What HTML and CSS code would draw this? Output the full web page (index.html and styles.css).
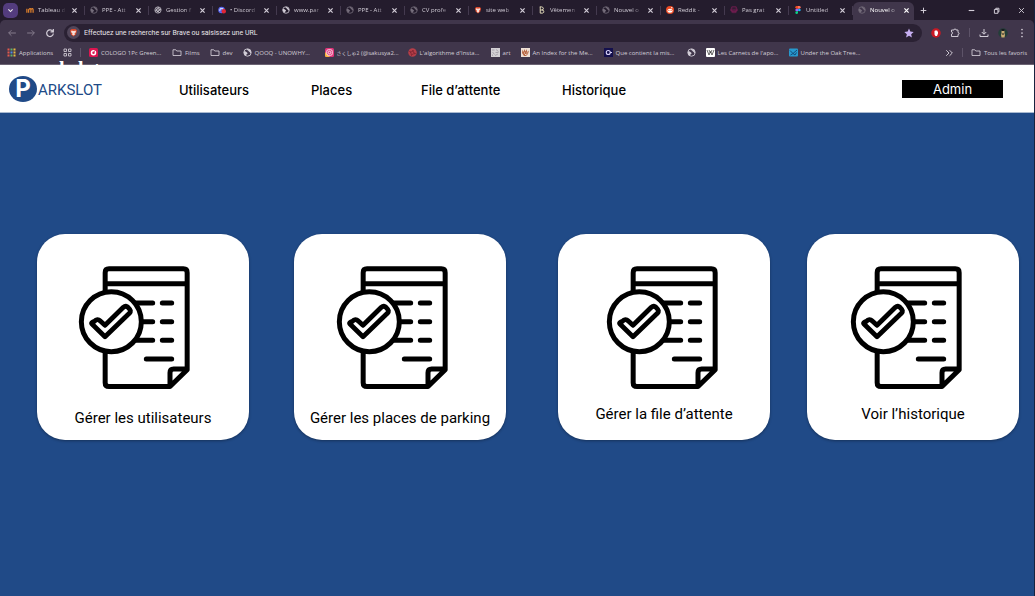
FILE: index.html
```html
<!DOCTYPE html>
<html lang="fr">
<head>
<meta charset="utf-8">
<title>Parkslot</title>
<link rel="stylesheet" href="styles.css">
</head>
<body>
<svg class="defs" aria-hidden="true">
  <symbol id="globe" viewBox="0 0 18 18"><circle cx="9" cy="9" r="7.4" fill="none" stroke="currentColor" stroke-width="1.8"/><path d="M2 7c3-1 4 1 6 2s1 3-1 4-1 3-1 3C3 14 1 11 2 7zM8 2c0 3 2 2 3 4s2 1 3 3 2 1 2 1c1-4-3-8-8-8z" fill="currentColor"/></symbol>
  <symbol id="folder" viewBox="0 0 20 18"><path d="M2 14V3.500h5.500l2 2.500H18v9H2z" fill="none" stroke="currentColor" stroke-width="1.700" stroke-linejoin="round"/></symbol>
  <symbol id="brave" viewBox="0 0 18 18"><path d="M5 2h8l3 3-2 8-5 4-5-4-2-8z" fill="#d9482b"/><path d="M5 5l4 1 4-1 1 3-3 3 1 2-3 2-3-2 1-2-3-3z" fill="#f6ded8"/></symbol>
  <symbol id="cross" viewBox="0 0 10 10"><path d="M2 2l6 6M8 2l-6 6" stroke="currentColor" stroke-width="1.700" fill="none"/></symbol>
  <symbol id="report" viewBox="144 123 336 369">
    <g fill="none" stroke="#000" stroke-width="15" stroke-linejoin="round" stroke-linecap="round">
      <path d="M420 484.500H237q-11.500 0-11.500-11.500V143q0-11.500 11.500-11.500h223q11.500 0 11.500 11.500v291zM226 176.500h245M420 483v-40q0-11 11-11h40"/>
      <path d="M300 234h68M397 234h28M300 290h68M397 290h28M300 346h68M397 346h28M349 402h76"/>
      <circle cx="244" cy="290" r="90" fill="#fff"/>
      <path d="M193 289q9-10 18-1l14 13 55-54q8-7 15 1 11 10 3 17l-73 70-39-38q-4-4 7-8z" stroke-width="14.500"/>
    </g>
  </symbol>
</svg>

<header class="browser">
  <div class="tabs">
    <button class="tab-menu" aria-label="Rechercher des onglets"><svg viewBox="0 0 10 10"><path d="M2 3.500l3 3 3-3" fill="none" stroke="#eee" stroke-width="1.600"/></svg></button>
    <button class="tab"><svg class="ico" viewBox="0 0 18 18"><path d="M2 6v9M6 15V8q4-4 5 0v7M11 8q4-4 5 0v7" fill="none" stroke="#e8862c" stroke-width="2.600"/></svg><span>Tableau d</span><svg class="x"><use href="#cross"/></svg></button>
    <button class="tab"><svg class="ico dim"><use href="#globe"/></svg><span>PPE - Att</span><svg class="x"><use href="#cross"/></svg></button>
    <button class="tab"><svg class="ico" viewBox="0 0 18 18"><g fill="none" stroke="#c9c5ce" stroke-width="1.800"><circle cx="9" cy="9" r="7"/><circle cx="9" cy="9" r="3"/><path d="M9 2l5 8M16 7l-9 6M13 15L4 10M3 12L8 4"/></g></svg><span>Gestion f</span><svg class="x"><use href="#cross"/></svg></button>
    <button class="tab"><svg class="ico" viewBox="0 0 18 18"><circle cx="8" cy="9" r="7.500" fill="#5966f2"/><path d="M4 11l1-5h6l1 4" fill="none" stroke="#fff" stroke-width="2"/><circle cx="13" cy="12" r="5" fill="#df2635"/></svg><span>• Discord</span><svg class="x"><use href="#cross"/></svg></button>
    <button class="tab"><svg class="ico"><use href="#globe"/></svg><span>www.par</span><svg class="x"><use href="#cross"/></svg></button>
    <button class="tab"><svg class="ico dim"><use href="#globe"/></svg><span>PPE - Att</span><svg class="x"><use href="#cross"/></svg></button>
    <button class="tab"><svg class="ico dim"><use href="#globe"/></svg><span>CV profe</span><svg class="x"><use href="#cross"/></svg></button>
    <button class="tab"><svg class="ico"><use href="#brave"/></svg><span>site web</span><svg class="x"><use href="#cross"/></svg></button>
    <button class="tab"><svg class="ico" viewBox="0 0 18 18"><path d="M5 2v14h5q4-1 3-4 0-3-4-3 4-1 3-4-1-3-4-3H4M5 9h4" fill="none" stroke="#e4ddbb" stroke-width="2.200"/></svg><span>Vêtemen</span><svg class="x"><use href="#cross"/></svg></button>
    <button class="tab"><svg class="ico dim"><use href="#globe"/></svg><span>Nouvel o</span><svg class="x"><use href="#cross"/></svg></button>
    <button class="tab"><svg class="ico" viewBox="0 0 18 18"><circle cx="9" cy="9" r="9" fill="#ed4b24"/><ellipse cx="9" cy="10.500" rx="6" ry="4.500" fill="#fff"/><circle cx="13" cy="4" r="1.500" fill="#fff"/><circle cx="6.500" cy="10" r="1.300" fill="#ed4b24"/><circle cx="11.500" cy="10" r="1.300" fill="#ed4b24"/></svg><span>Reddit -</span><svg class="x"><use href="#cross"/></svg></button>
    <button class="tab"><svg class="ico" viewBox="0 0 18 18"><path d="M4 2h10v10H4zM2 6v5h14V6M5 12v4M13 12v4M7 6v3M11 6v3M7 15h4" fill="none" stroke="#7b1d55" stroke-width="2"/></svg><span>Pas grat</span><svg class="x"><use href="#cross"/></svg></button>
    <button class="tab"><svg class="ico" viewBox="0 0 18 18"><path d="M9 0H6a3 3 0 000 6h3z" fill="#f24e1e"/><path d="M9 0h3a3 3 0 010 6H9z" fill="#ff7262"/><path d="M9 6H6a3 3 0 000 6h3z" fill="#a259ff"/><circle cx="12" cy="9" r="3" fill="#1abcfe"/><path d="M9 12H6a3 3 0 103 3z" fill="#0acf83"/></svg><span>Untitled</span><svg class="x"><use href="#cross"/></svg></button>
    <button class="tab active"><svg class="ico dim"><use href="#globe"/></svg><span>Nouvel o</span><svg class="x"><use href="#cross"/></svg></button>
    <button class="ghost plus" aria-label="Nouvel onglet"><svg viewBox="0 0 10 10"><path d="M5 1v8M1 5h8" stroke="currentColor" stroke-width="1.400"/></svg></button>
    <div class="window-controls">
      <button class="ghost" aria-label="Réduire"><svg viewBox="0 0 10 10"><path d="M1 5h8" stroke="currentColor" stroke-width="1.600"/></svg></button>
      <button class="ghost" aria-label="Restaurer"><svg viewBox="0 0 10 10"><path d="M2 3.500h5V9H2zM4 3.500V1.800h4.500V7H7" fill="none" stroke="currentColor" stroke-width="1.400"/></svg></button>
      <button class="ghost" aria-label="Fermer"><svg viewBox="0 0 10 10"><path d="M1.500 1.500l7 7M8.500 1.500l-7 7" stroke="currentColor" stroke-width="1.300"/></svg></button>
    </div>
  </div>

  <div class="toolbar">
    <button class="ghost off" aria-label="Retour"><svg viewBox="0 0 18 18"><path d="M16 9H3M8 4L3 9l5 5" fill="none" stroke="currentColor" stroke-width="1.800"/></svg></button>
    <button class="ghost off" aria-label="Avancer"><svg viewBox="0 0 18 18"><path d="M2 9h13M10 4l5 5-5 5" fill="none" stroke="currentColor" stroke-width="1.800"/></svg></button>
    <button class="ghost" aria-label="Actualiser"><svg viewBox="0 0 18 18"><path d="M14 6a6 6 0 101 4M15 2v5h-5" fill="none" stroke="currentColor" stroke-width="2.200"/></svg></button>
    <div class="address">
      <span class="badge"><svg><use href="#brave"/></svg></span>
      <input type="text" aria-label="Adresse" placeholder="Effectuez une recherche sur Brave ou saisissez une URL">
      <button class="ghost star" aria-label="Favori"><svg viewBox="0 0 18 18"><path d="M9 1l2.400 5.500 6 .6-4.500 4L14.200 17 9 13.900 3.800 17l1.300-5.900-4.500-4 6-.6z" fill="currentColor"/></svg></button>
    </div>
    <div class="tools">
      <button class="ghost" aria-label="Bloqueur"><svg viewBox="0 0 20 20"><circle cx="10" cy="10" r="9.500" fill="#c91924"/><path d="M7 6v7l2 3h3l2-5V7h-1.500V5h-4z" fill="#fff"/></svg></button>
      <button class="ghost" aria-label="Extensions"><svg viewBox="0 0 20 20"><path d="M3 4h5c0-3 4-3 4 0h4v5c3 0 3 4 0 4v4H3v-5c3 0 3-4 0-4z" fill="none" stroke="currentColor" stroke-width="1.900"/></svg></button>
      <i class="sep"></i>
      <button class="ghost" aria-label="Téléchargements"><svg viewBox="0 0 20 20"><path d="M10 2v10M5.500 8l4.500 4.500L14.500 8M2 13v4h16v-4" fill="none" stroke="currentColor" stroke-width="2"/></svg></button>
      <button class="ghost" aria-label="Profil"><svg viewBox="0 0 20 20"><circle cx="10" cy="10" r="9.500" fill="#223e38"/><path d="M7 7q0-4 3-4t3 4v4l1 3-1 5H7l-1-5 1-3z" fill="#c8aa72"/><path d="M7 2h6v4H7zM8 11h4v2H8z" fill="#191a20"/></svg></button>
      <button class="ghost" aria-label="Menu"><svg viewBox="0 0 20 20" fill="currentColor"><circle cx="10" cy="3" r="1.700"/><circle cx="10" cy="10" r="1.700"/><circle cx="10" cy="17" r="1.700"/></svg></button>
    </div>
  </div>

  <nav class="bookmarks" aria-label="Favoris">
    <a href="#"><svg class="ico" viewBox="0 0 18 18"><path d="M1 3h4M1 9h4M1 15h4" stroke="#e15a4c" stroke-width="4"/><path d="M7 3h4M7 15h4" stroke="#5eb06a" stroke-width="4"/><path d="M7 9h4" stroke="#4d8fe5" stroke-width="4"/><path d="M13 3h4M13 9h4M13 15h4" stroke="#e5b941" stroke-width="4"/></svg><span class="apps">Applications</span></a>
    <a href="#" aria-label="Groupes"><svg class="ico" viewBox="0 0 18 18"><path d="M2 2h5v5H2zM11 2h5v5h-5zM2 11h5v5H2zM11 11h5v5h-5z" fill="none" stroke="currentColor" stroke-width="1.700"/></svg></a>
    <i class="sep"></i>
    <a href="#"><svg class="ico" viewBox="0 0 18 18"><rect width="18" height="18" rx="3" fill="#dc1550"/><circle cx="9" cy="9.500" r="4" fill="none" stroke="#fff" stroke-width="3"/><path d="M9 9l4-5" stroke="#dc1550" stroke-width="1.500"/></svg><span class="long">COLOGO 1Pc Green...</span></a>
    <a href="#"><svg class="ico wide"><use href="#folder"/></svg><span>Films</span></a>
    <a href="#"><svg class="ico wide"><use href="#folder"/></svg><span>dev</span></a>
    <a href="#"><svg class="ico"><use href="#globe"/></svg><span class="mid">QOOQ - UNOWHY...</span></a>
    <a href="#"><svg class="ico" viewBox="0 0 18 18"><rect width="18" height="18" rx="3" fill="#df3479"/><path d="M0 8l10 10H3q-3 0-3-3z" fill="#f8b33d"/><g fill="none" stroke="#fff" stroke-width="1.600"><rect x="3.500" y="3.500" width="11" height="11" rx="3"/><circle cx="9" cy="9" r="2.500"/></g></svg><span class="long"><small>さくしゃ2</small> (@sakusya2...</span></a>
    <a href="#"><svg class="ico" viewBox="0 0 18 18"><circle cx="9" cy="9" r="8.500" fill="#b63e48"/><path d="M3 7l5 1 2-4 1 5 4 2-6 1-2 3-1-5z" fill="none" stroke="#7a222f" stroke-width="1.500"/></svg><span class="long">L'algorithme d'Insta...</span></a>
    <a href="#"><svg class="ico" viewBox="0 0 18 18"><path d="M0 0h18v18H0z" fill="#d3d0d4"/><path d="M2 4h5M10 3l5 4M3 8l4 5M9 9h6M8 15l6-3M3 16v-3" stroke="#928b96" stroke-width="1.300"/></svg><span>art</span></a>
    <a href="#"><svg class="ico" viewBox="0 0 18 18"><path d="M0 0h18v18H0z" fill="#eee0d6"/><path d="M3 3l2 5 2-6 2 5 3-5v6l4-3-2 7-4 4H6l-4-6z" fill="#b96743"/><path d="M6 10h2M11 10h2M8 13h3" stroke="#fff" stroke-width="1.500"/></svg><span class="long">An Index for the Me...</span></a>
    <a href="#"><svg class="ico" viewBox="0 0 18 18"><path d="M0 0h18v18H0z" fill="#14104d"/><circle cx="8.500" cy="9" r="4" fill="none" stroke="#d9d3fc" stroke-width="2.200"/><path d="M12 9h4" stroke="#d9d3fc" stroke-width="2"/></svg><span class="long">Que contient la mis...</span></a>
    <a href="#" aria-label="Site"><svg class="ico"><use href="#globe"/></svg></a>
    <a href="#"><svg class="ico" viewBox="0 0 18 18"><rect width="18" height="18" rx="2" fill="#fff"/><path d="M2 4l4 10 3-7 3 7 4-10M6 4l3 6 3-6" fill="none" stroke="#333" stroke-width="1.500"/></svg><span class="long">Les Carnets de l'apo...</span></a>
    <a href="#"><svg class="ico" viewBox="0 0 18 18"><rect y="1" width="18" height="16" rx="2" fill="#2799ce"/><path d="M2 5l6 6 8-7M3 14l5-3 4 3 3-5" fill="none" stroke="#144b78" stroke-width="2"/></svg><span class="long">Under the Oak Tree...</span></a>
    <div class="more">
      <button class="ghost" aria-label="Plus de favoris"><svg viewBox="0 0 18 18"><path d="M4 4l5 5-5 5M10 4l5 5-5 5" fill="none" stroke="currentColor" stroke-width="1.700"/></svg></button>
      <i class="sep"></i>
      <a href="#"><svg class="ico wide"><use href="#folder"/></svg><span>Tous les favoris</span></a>
    </div>
    <div class="peek">parkslot</div>
  </nav>
</header>

<header class="site">
  <a class="logo" href="#"><span class="mark">P</span><span class="name">ARKSLOT</span></a>
  <nav class="menu">
    <a href="#">Utilisateurs</a>
    <a href="#">Places</a>
    <a href="#">File d’attente</a>
    <a href="#">Historique</a>
  </nav>
  <button class="admin">Admin</button>
</header>

<main class="cards">
  <a class="card users" href="#"><svg><use href="#report"/></svg><span>Gérer les utilisateurs</span></a>
  <a class="card places" href="#"><svg><use href="#report"/></svg><span>Gérer les places de parking</span></a>
  <a class="card queue" href="#"><svg><use href="#report"/></svg><span>Gérer la file d’attente</span></a>
  <a class="card history" href="#"><svg><use href="#report"/></svg><span>Voir l’historique</span></a>
</main>
</body>
</html>
```

FILE: styles.css
```css
* { box-sizing: border-box; }

body {
  margin: 0;
  min-height: 100vh;
  display: flex;
  flex-direction: column;
  background: #204a87;
  border-right: 1px solid #172340;
  font-family: Roboto, "Liberation Sans", sans-serif;
}

a { color: inherit; text-decoration: none; }
button { border: 0; padding: 0; font: inherit; color: inherit; background: none; }
svg { display: block; flex: none; }
.defs { position: absolute; width: 0; height: 0; }

/* Browser frame */
.browser {
  background: #241c2d;
  color: #d3ced8;
  font: 6px/10px "Open Sans", "Noto Sans CJK JP", sans-serif;
}
.tabs { display: flex; height: 20px; align-items: center; padding-left: 3px; }
.tab-menu {
  width: 15px; height: 15px; margin-right: 3px;
  display: grid; place-items: center;
  border-radius: 5px; background: #533c7e;
}
.tab-menu svg { width: 7px; height: 7px; }
.tab {
  position: relative;
  flex: 0 0 64px;
  height: 17px;
  display: flex;
  align-items: center;
  padding-left: 5px;
}
.tab::after {
  content: "";
  position: absolute;
  right: 0; top: 4px;
  width: 1px; height: 9px;
  background: #443a4f;
}
.tab span {
  width: 28px;
  margin: 0 5px 0 4px;
  text-align: left;
  white-space: nowrap;
  mask-image: linear-gradient(90deg, #000 65%, transparent);
}
.ico { width: 9px; height: 9px; }
.tab .ico { width: 8px; height: 8px; }
.bookmarks .ico.wide { width: 10px; }
.dim { color: #756d7b; }
.x { width: 7px; height: 7px; }
.active {
  flex-basis: 61px;
  height: 18px;
  margin-top: 2px;
  padding-bottom: 2px;
  background: #40364b;
  border-radius: 6px 6px 0 0;
  color: #fff;
}
.active::after { display: none; }
.ghost { display: grid; place-items: center; }
.ghost svg { width: 10px; height: 10px; }
.plus { margin-left: 6px; }
.plus svg { width: 7px; height: 7px; }
.window-controls { display: flex; gap: 18px; margin: 0 9px 0 auto; }
.window-controls svg { width: 7px; height: 7px; }
.toolbar {
  display: flex;
  align-items: center;
  gap: 9px;
  height: 25px;
  padding: 0 7px;
  background: #40364b;
  border-radius: 5px 5px 0 0;
}
.off { color: #847b8c; }
.address {
  flex: 1;
  display: flex;
  align-items: center;
  height: 18px;
  padding: 0 8px 0 3px;
  border-radius: 9px;
  background: #2a2133;
}
.badge { width: 13px; height: 13px; display: grid; place-items: center; border-radius: 50%; background: #51465a; }
.badge svg { width: 9px; height: 9px; }
.address input {
  flex: 1;
  min-width: 0;
  padding: 0 4px;
  border: 0;
  background: none;
  color: #e8e5ea;
  font: 7px/12px Roboto, sans-serif;
}
.address input::placeholder { color: #e8e5ea; opacity: 1; }
.star { color: #c7aff2; }
.tools { display: flex; align-items: center; gap: 9px; }
.tools svg { width: 10px; height: 10px; }
.sep { width: 1px; height: 9px; background: #5d5368; }
.bookmarks {
  position: relative;
  display: flex;
  align-items: center;
  gap: 10px;
  height: 20px;
  padding: 0 7px 4px;
  background: #40364b;
  border-bottom: 1px solid #6b6373;
  white-space: nowrap;
}
.bookmarks > .sep { margin: 0 -2px; }
.bookmarks a { display: flex; align-items: center; gap: 3px; }
.bookmarks small { font-size: 5px; }
.bookmarks .apps { width: 34px; }
.bookmarks .long { width: 61px; }
.bookmarks .mid { width: 60px; }
.more { display: flex; align-items: center; gap: 8px; margin-left: auto; }
.peek {
  position: absolute;
  left: 29px; bottom: -1px;
  height: 5px;
  overflow: hidden;
  color: #fff;
  font: bold 20px/18px "Liberation Serif", serif;
}

/* Site header */
.site {
  display: flex;
  align-items: center;
  height: 48px;
  padding: 0 31px 0 9px;
  background: #fff;
  border-bottom: 1px solid #a9bad1;
  font: 500 13px/18px Inter, sans-serif;
  color: #000;
}
.logo {
  display: flex;
  align-items: center;
  width: 170px;
  color: #204a87;
  font: 15px/26px Roboto, sans-serif;
}
.name, .menu { padding-top: 2px; }
.mark {
  width: 28px; height: 26px;
  margin-right: 1px;
  border-radius: 50%;
  background: #204a87;
  color: #fff;
  font: 700 24px/26px Inter, sans-serif;
  text-align: center;
}
.menu { display: grid; grid-template-columns: 132px 110px 141px auto; }
.admin { width: 101px; height: 18px; margin-left: auto; background: #000; color: #fff; font-weight: 400; }

/* Dashboard */
.cards {
  display: flex;
  align-items: flex-start;
  padding: 121px 15px 40px 37px;
}
.card {
  flex: 1;
  height: 206px;
  padding-top: 32px;
  border-radius: 28px;
  background: #fff;
  box-shadow: 0 1px 3px #0005;
  color: #000;
  font-size: 15px;
  line-height: 20px;
}
.card svg { width: 112px; height: 123px; }
.card span { display: block; margin-top: 19px; text-align: center; white-space: nowrap; }
.users { margin-right: 45px; }
.users svg { margin-left: 41px; }
.places { margin-right: 52px; }
.places svg { margin-left: 42px; }
.queue { margin-right: 37px; }
.queue svg { margin-left: 48px; }
.history svg { margin-left: 43px; }
.queue span, .history span { margin-top: 15px; }
```
